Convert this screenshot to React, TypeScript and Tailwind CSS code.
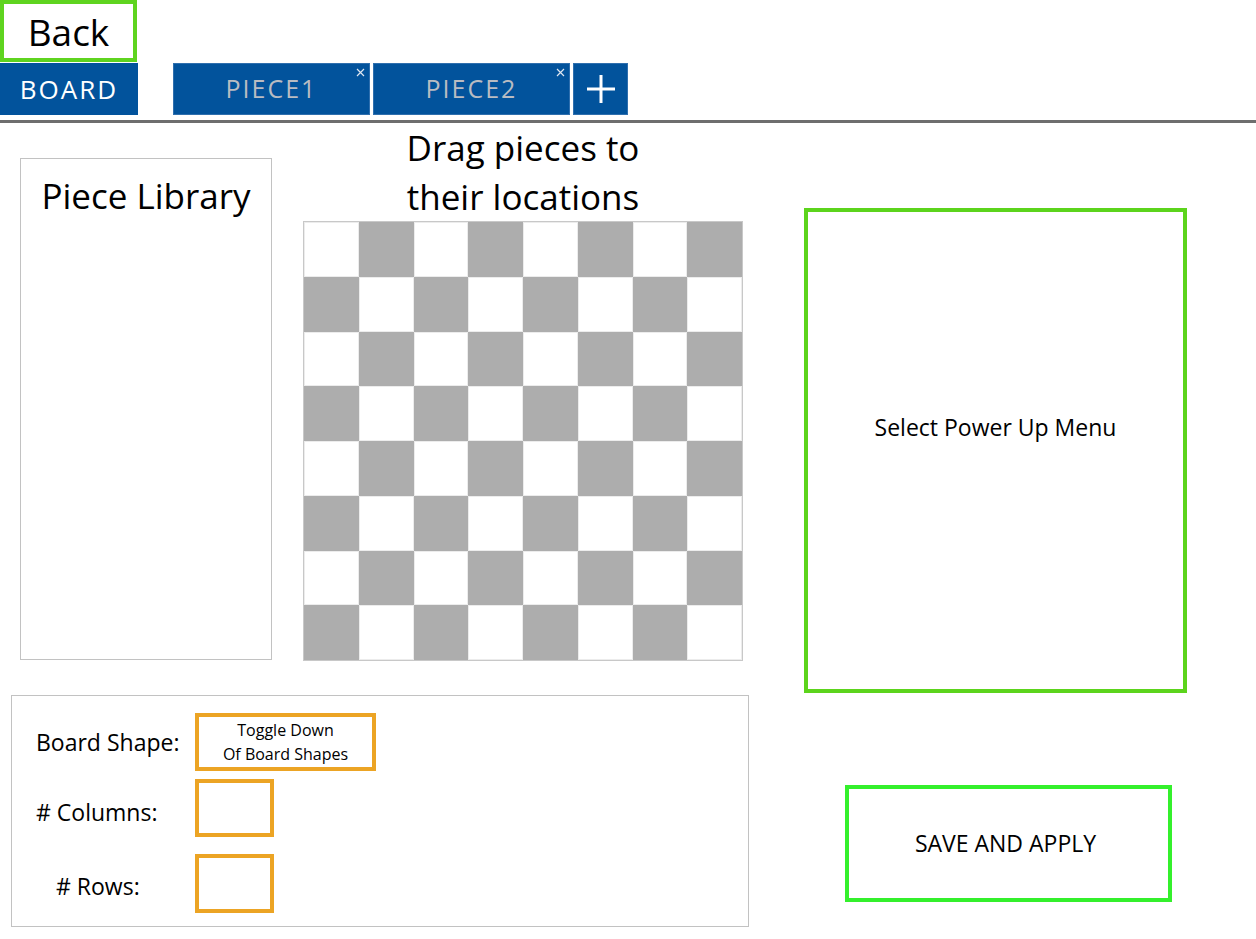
import React from "react";

const font = { fontFamily: '"Open Sans", "Noto Sans", sans-serif' };

const CloseMark = () => (
  <svg width="9" height="9" viewBox="0 0 9 9" className="absolute top-[4px] right-[4px]">
    <path d="M1 1L8 8M8 1L1 8" stroke="#dfe6f0" strokeWidth="1.2" />
  </svg>
);

const Tab = ({ label, closable }: { label: string; closable?: boolean }) => (
  <div className="relative flex items-center justify-center w-[197px] h-[52px] bg-[#02539c] border border-[#2f6fae]">
    <span className="text-[25px] tracking-[2px] text-[#b9bcc2]">{label}</span>
    {closable && <CloseMark />}
  </div>
);

const Board = () => {
  const cells = Array.from({ length: 64 }, (_, i) => i);
  return (
    <div className="grid grid-cols-8 grid-rows-8 w-[440px] h-[440px] border border-[#c8c8c8]">
      {cells.map((i) => {
        const dark = (Math.floor(i / 8) + (i % 8)) % 2 === 1;
        return (
          <div
            key={i}
            className={dark ? "bg-[#adadad]" : "bg-white border border-[#ececec]"}
          />
        );
      })}
    </div>
  );
};

const OrangeBox = ({ className, children }: { className: string; children?: React.ReactNode }) => (
  <div className={`flex flex-col items-center justify-center border-4 border-[#eca424] ${className}`}>
    {children}
  </div>
);

export default function App() {
  return (
    <div className="w-[1256px] h-[939px] bg-white text-black overflow-hidden" style={font}>
      <button className="flex items-center justify-center w-[137px] h-[62px] border-4 border-[#5fd41f] text-[37px] leading-none">
        Back
      </button>

      <div className="flex items-end h-[53px]">
        <div className="flex items-center justify-center w-[138px] h-[52px] bg-[#02539c]">
          <span className="text-[26px] tracking-[2px] text-white">BOARD</span>
        </div>
        <div className="flex gap-[3px] ml-[35px]">
          <Tab label="PIECE1" closable />
          <Tab label="PIECE2" closable />
          <div className="flex items-center justify-center w-[55px] h-[52px] bg-[#02539c] border border-[#2f6fae]">
            <svg width="30" height="30" viewBox="0 0 30 30">
              <path d="M15 1V29M1 15H29" stroke="white" strokeWidth="3" />
            </svg>
          </div>
        </div>
      </div>

      <div className="h-[3px] bg-[#6e6e6e] mt-[5px]" />

      <div className="flex">
        <div className="flex flex-col w-[760px]">
          <div className="flex items-start">
            <div className="flex justify-center w-[252px] h-[502px] mt-[35px] ml-[20px] border border-[#c2c2c2]">
              <span className="mt-[14px] text-[35px] leading-[1.3]">Piece Library</span>
            </div>
            <div className="flex flex-col items-center ml-[31px]">
              <div className="text-[35px] leading-[49px] text-center">
                Drag pieces to
                <br />
                their locations
              </div>
              <Board />
            </div>
          </div>

          <div className="flex flex-col w-[738px] h-[232px] mt-[34px] ml-[11px] border border-[#c2c2c2]">
            <div className="flex items-center mt-[17px]">
              <span className="w-[183px] pl-[24px] text-[23px]">Board Shape:</span>
              <OrangeBox className="w-[181px] h-[58px] text-[16px] leading-[24px]">
                <span>Toggle Down</span>
                <span>Of Board Shapes</span>
              </OrangeBox>
            </div>
            <div className="flex items-center mt-[8px]">
              <span className="w-[183px] pl-[24px] pt-[8px] text-[23px]">#&nbsp;Columns:</span>
              <OrangeBox className="w-[79px] h-[58px]" />
            </div>
            <div className="flex items-center mt-[17px]">
              <span className="w-[183px] pl-[44px] pt-[6px] text-[23px]">#&nbsp;Rows:</span>
              <OrangeBox className="w-[79px] h-[59px]" />
            </div>
          </div>
        </div>

        <div className="flex flex-col ml-[44px]">
          <div className="flex items-center justify-center w-[383px] h-[485px] mt-[85px] pb-[46px] border-4 border-[#5cd41c]">
            <span className="text-[23px]">Select Power Up Menu</span>
          </div>
          <div className="flex items-center justify-center w-[327px] h-[117px] mt-[92px] ml-[41px] border-4 border-[#34f02c]">
            <span className="text-[23px] pr-[6px]">SAVE AND APPLY</span>
          </div>
        </div>
      </div>
    </div>
  );
}
